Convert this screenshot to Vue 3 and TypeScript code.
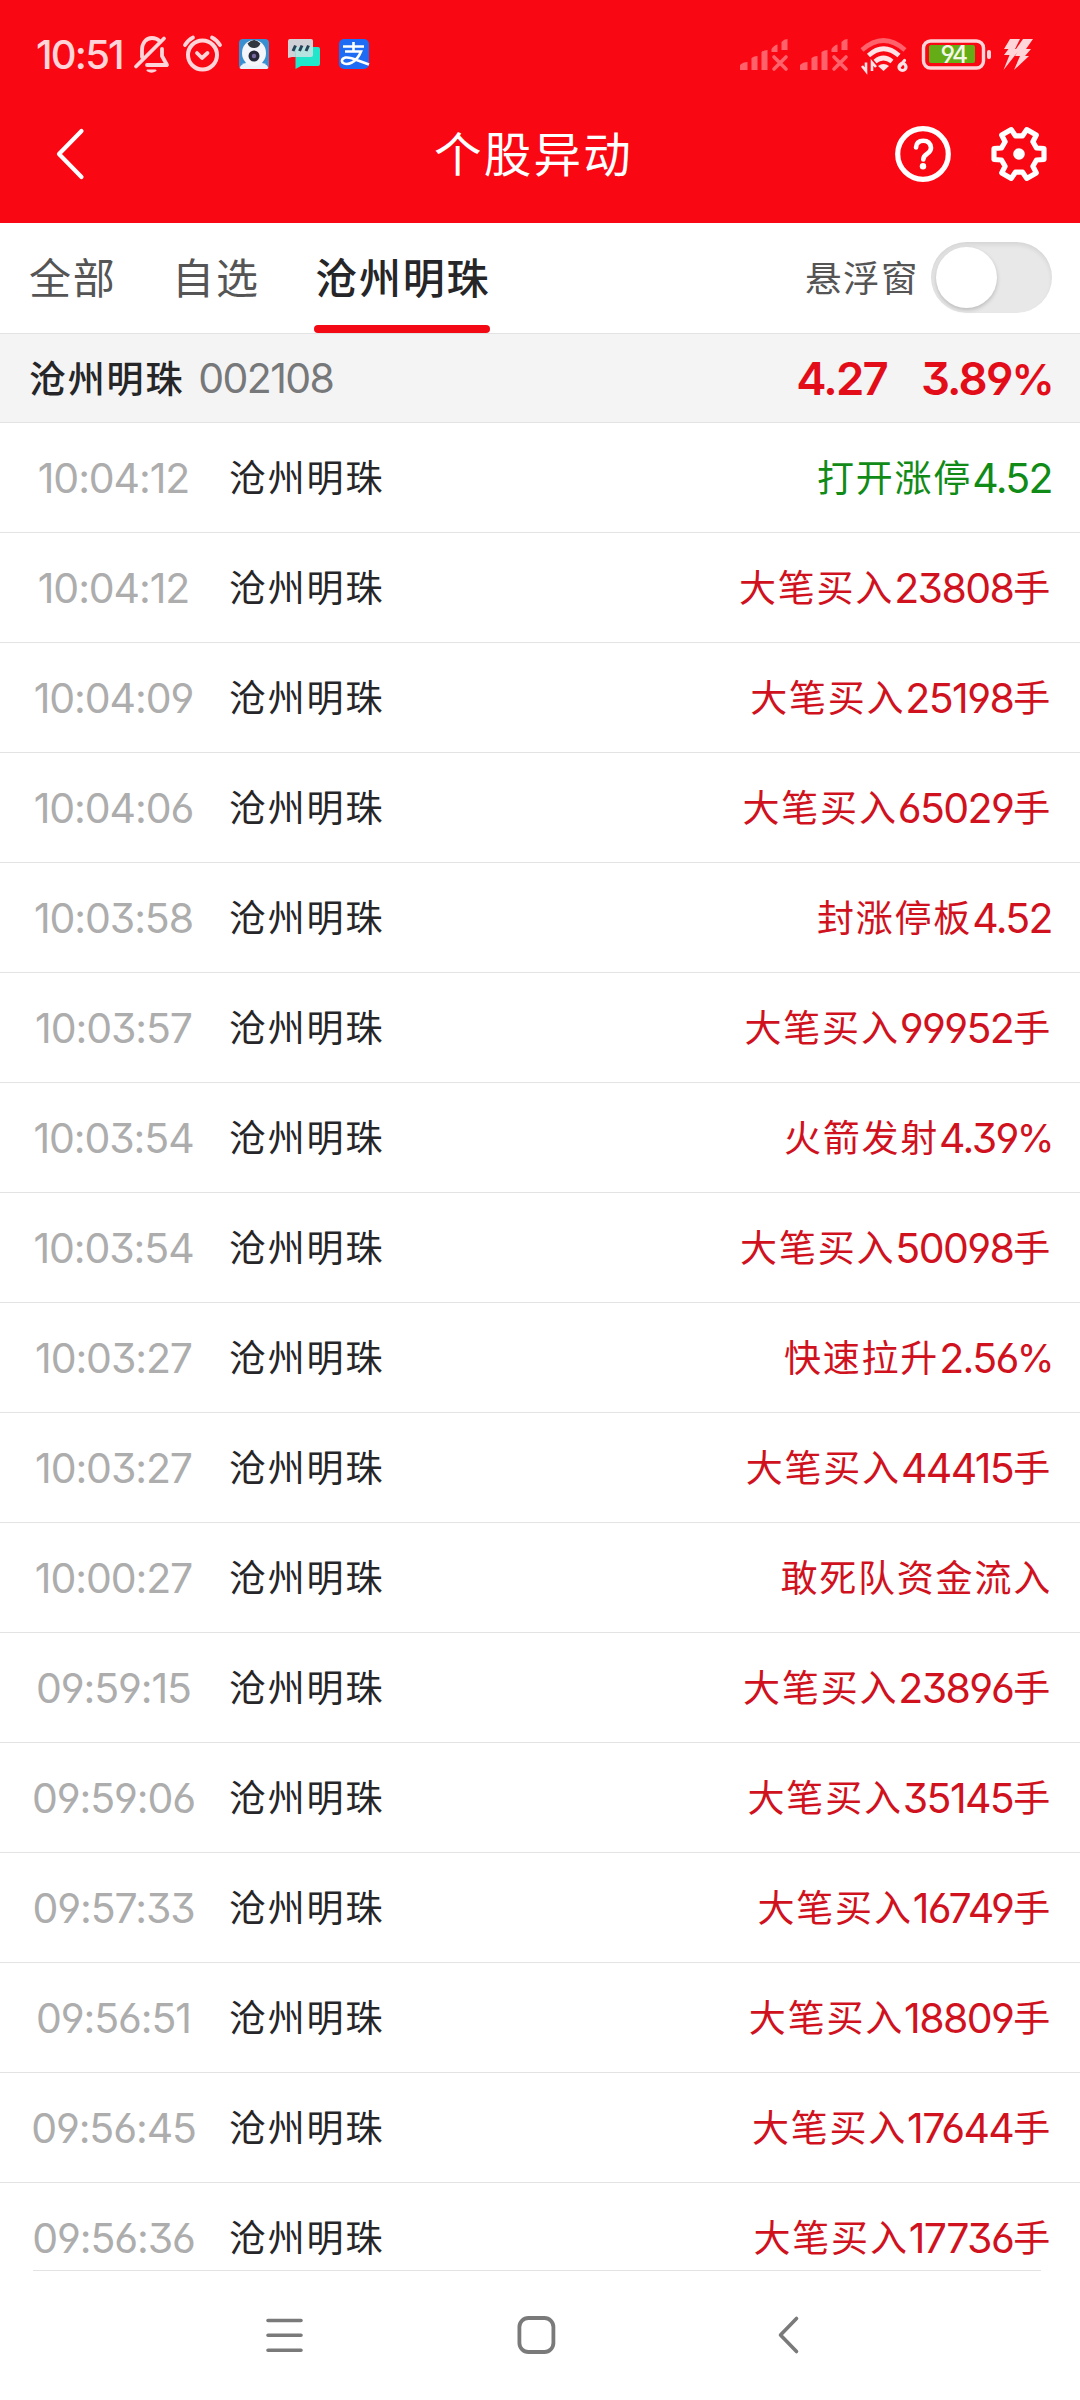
<script setup lang="ts">
interface Move {
  time: string
  label: string
  down?: boolean
}

const stock = '沧州明珠'

const moves: Move[] = [
  { time: '10:04:12', label: '打开涨停4.52', down: true },
  { time: '10:04:12', label: '大笔买入23808手' },
  { time: '10:04:09', label: '大笔买入25198手' },
  { time: '10:04:06', label: '大笔买入65029手' },
  { time: '10:03:58', label: '封涨停板4.52' },
  { time: '10:03:57', label: '大笔买入99952手' },
  { time: '10:03:54', label: '火箭发射4.39%' },
  { time: '10:03:54', label: '大笔买入50098手' },
  { time: '10:03:27', label: '快速拉升2.56%' },
  { time: '10:03:27', label: '大笔买入44415手' },
  { time: '10:00:27', label: '敢死队资金流入' },
  { time: '09:59:15', label: '大笔买入23896手' },
  { time: '09:59:06', label: '大笔买入35145手' },
  { time: '09:57:33', label: '大笔买入16749手' },
  { time: '09:56:51', label: '大笔买入18809手' },
  { time: '09:56:45', label: '大笔买入17644手' },
  { time: '09:56:36', label: '大笔买入17736手' },
]

// Splits a label into runs of Chinese text, figures and percent signs.
const runs = (label: string) =>
  (label.match(/[\d.]+|%|[^\d.%]+/g) ?? []).map((text) => ({
    text,
    kind: /^\d/.test(text) ? 'figure' : text === '%' ? 'percent' : 'han',
  }))
</script>

<template>
  <div class="screen">
    <header class="top">
      <div class="status">
        <span class="clock">10:51</span>
        <svg class="status-left" width="240" height="44" viewBox="132 32 240 44" fill="none">
          <g stroke="#ffd5d9" stroke-width="3.8" stroke-linecap="round" stroke-linejoin="round">
            <path d="M136 66.500L164 38.500" />
            <path d="M142 57V50C142 43 146 38 152 38C155 38 157.500 39 159.500 41M162 49V56L167 65H147" />
            <path d="M147.500 70.500Q151.500 73 155.500 70.500Z" fill="#ffd5d9" stroke-width="2" />
            <circle cx="202.500" cy="55" r="14.500" stroke-width="4" />
            <path d="M197 53L202 58L207.500 53" />
            <path d="M185 45Q188 40 193 37.500M212 37.500Q217 40 220 45" />
          </g>
          <rect x="239" y="39" width="30" height="30" rx="4" fill="#3a8fd0" />
          <path d="M239.500 68Q241 62 254 62T268.500 68L267 69H241Z" fill="#e9f2fb" />
          <ellipse cx="254" cy="53" rx="12" ry="13" fill="#f4f6fb" />
          <path d="M247.500 43.500Q254 36.500 260.500 43.500Q258.500 48 254 48T247.500 43.500Z" fill="#33373f" />
          <circle cx="254" cy="56" r="5.500" fill="#272638" />
          <circle cx="254" cy="56" r="2.200" fill="#7569a0" />
          <path d="M290 39H311Q313 39 313 41V55Q313 57 311 57H292L288 58V41Q288 39 290 39Z" fill="#cfd1d6" />
          <path d="M297 47H318Q320 47 320 49V64Q320 66 318 66H301L295.500 69V49Q295.500 47 297 47Z" fill="#21e6cb" />
          <path d="M297 47H313V55Q313 57 311 57H295.500V49Q295.500 47 297 47Z" fill="#b5e3df" />
          <path d="M295.500 45.500L293 51M302 45.500L299.500 51M308.500 45.500L306 51" stroke="#28425a" stroke-width="3" />
          <rect x="339" y="39" width="30" height="30" rx="5" fill="#1d6cf3" />
          <path
            d="M343 46.500H364M353.500 42V51.500M345 51.500H361Q358 59 352 62.500Q346 65.500 342.500 62.500Q340.500 59 345.500 57.500Q350 57 358 60.500L369 64.500"
            stroke="#fff"
            stroke-width="2.600"
          />
        </svg>
        <svg class="status-right" width="310" height="44" viewBox="736 32 310 44">
          <g v-for="n in 2" :key="n" :transform="`translate(${(n - 1) * 60} 0)`" fill="#ff626b">
            <path d="M740 70V65Q743 62 747.500 62V70Z M751.500 70V58Q754 56 757.500 56V70Z M761.500 70V52Q764 50 767.500 50V70Z M771.500 52V49Q774 45 777.500 44.500V52Z M781.500 50V42Q784 39 787.500 39V50Z" />
            <path d="M774 57L786 69M786 57L774 69" stroke="#ff626b" stroke-width="3.600" stroke-linecap="round" />
          </g>
          <g fill="none" stroke="#ffe3e6" stroke-width="4.600">
            <path d="M862 50Q883.500 31 905 50" stroke="#ff626b" />
            <path d="M868.500 55.500Q883.500 42 899 55.500" />
            <path d="M875 61.500Q883.500 54.500 892 61.500" />
          </g>
          <path d="M878 66Q883.500 62 889 66L883.500 71Z" fill="#ffe3e6" />
          <path d="M862 66L866 71V62.500M876 67L872 62.500V71" fill="none" stroke="#ffe3e6" stroke-width="2.600" />
          <path d="M904.500 60.500L900 66" stroke="#ffe3e6" stroke-width="3.200" stroke-linecap="round" />
          <circle cx="902.500" cy="67" r="3.500" fill="none" stroke="#ffe3e6" stroke-width="3.200" />
          <rect x="923.500" y="41" width="60" height="27" rx="7" fill="none" stroke="#ffd5d9" stroke-width="3.400" />
          <rect x="929" y="45" width="46" height="18" rx="2" fill="#64ad17" />
          <rect x="987" y="50" width="4" height="9" rx="2" fill="#ffd5d9" />
          <text class="charge" x="940.500" y="62.800">94</text>
          <path
            d="M1010 39H1020L1015 49H1020L1003.500 70L1009.500 55H1004L1008.500 49H1004ZM1023 39H1033L1026 49H1031L1025 56H1029L1014 70L1020 56H1015L1019.500 49H1016Z"
            fill="#ffd5d9"
          />
        </svg>
      </div>
      <div class="titlebar">
        <svg class="back" width="32" height="56" viewBox="0 0 32 56" fill="none" stroke="#fff" stroke-width="4.200" stroke-linecap="round" stroke-linejoin="round">
          <path d="M28.500 5L6 28L28.500 51" />
        </svg>
        <h1>个股异动</h1>
        <div class="actions">
          <svg width="58" height="58" viewBox="0 0 58 58" fill="none" stroke="#fff" stroke-linecap="round" stroke-linejoin="round">
            <circle cx="29" cy="29" r="25.300" stroke-width="5.200" />
            <path d="M22 22.500Q22.500 15.800 29.300 15.800T37 22.800Q37 26 33.500 28.500Q29.300 31 29.300 34.500" stroke-width="4.600" />
            <circle cx="29" cy="41.200" r="3.200" fill="#fff" stroke="none" />
          </svg>
          <svg width="58" height="58" viewBox="-29 -29 58 58" fill="none" stroke="#fff" stroke-linejoin="round">
            <path
              d="M17.500 -6L25 -5.500V5.500L17.500 6L13.900 12.200L17.300 18.900L7.700 24.400L3.600 18.200H-3.600L-7.700 24.400L-17.300 18.900L-13.900 12.200L-17.500 6L-25 5.500V-5.500L-17.500 -6L-13.900 -12.200L-17.300 -18.900L-7.700 -24.400L-3.600 -18.200H3.600L7.700 -24.400L17.300 -18.900L13.900 -12.200Z"
              stroke-width="5.200"
            />
            <circle r="5.800" fill="#fff" stroke="none" />
          </svg>
        </div>
      </div>
    </header>

    <nav class="tabs">
      <span class="tab">全部</span>
      <span class="tab">自选</span>
      <span class="tab active">{{ stock }}</span>
      <span class="float-label">悬浮窗</span>
      <span class="switch"><span class="knob"></span></span>
    </nav>

    <section class="quote">
      <span class="quote-name">{{ stock }}</span>
      <span class="quote-code">002108</span>
      <span class="price">4.27</span>
      <span class="change">3.89<span class="sign">%</span></span>
    </section>

    <ul class="list">
      <li v-for="(move, i) in moves" :key="i" class="row">
        <span class="time">{{ move.time }}</span>
        <span class="name">{{ stock }}</span>
        <span class="label" :class="{ down: move.down }">
          <span v-for="(run, j) in runs(move.label)" :key="j" :class="run.kind">{{ run.text }}</span>
        </span>
      </li>
    </ul>

    <footer class="navbar">
      <svg width="44" height="44" viewBox="0 0 44 44" stroke="#7a7a7a" stroke-width="3.600" stroke-linecap="round">
        <path d="M7 6.500H40M7 21.300H40M7 36.300H40" />
      </svg>
      <svg width="44" height="44" viewBox="0 0 44 44" fill="none" stroke="#7a7a7a" stroke-width="3.800">
        <rect x="4.400" y="4" width="34" height="34" rx="9" />
      </svg>
      <svg width="44" height="44" viewBox="0 0 44 44" fill="none" stroke="#7a7a7a" stroke-width="3.600" stroke-linecap="round" stroke-linejoin="round">
        <path d="M27.500 4.500L11.500 21L27.500 37.500" />
      </svg>
    </footer>
  </div>
</template>

<style>
body {
  background: #fff;
}
</style>

<style scoped>
.screen {
  display: flex;
  flex-direction: column;
  width: 1080px;
  height: 2400px;
  overflow: hidden;
  background: #fff;
  color: #262628;
  font-family: Inter, 'Noto Sans CJK SC', sans-serif;
  font-feature-settings: 'cv03', 'cv04', 'cv09';
  white-space: nowrap;
}
.top {
  height: 223px;
  background: #fa0714;
}
.status {
  display: flex;
  align-items: center;
  height: 108px;
  padding-right: 34px;
}
.clock {
  width: 96px;
  padding-left: 36px;
  color: #ffd5d9;
  font-size: 40px;
  font-weight: 500;
  letter-spacing: -1.800px;
}
.status-right {
  margin-left: auto;
}
.charge {
  fill: #f4f7e8;
  font-size: 24.500px;
  font-weight: 500;
  letter-spacing: -2px;
}
.titlebar {
  display: grid;
  grid-template-columns: 250px 1fr 250px;
  align-items: center;
  height: 92px;
}
.back {
  margin-left: 53px;
}
h1 {
  margin: 0;
  padding: 2px 13px 0 0;
  color: #fff;
  font-size: 47.500px;
  font-weight: 400;
  line-height: 90px;
  letter-spacing: 2.200px;
  text-align: center;
}
.actions {
  display: flex;
  justify-content: flex-end;
  gap: 38px;
  padding-right: 32px;
}
.tabs {
  display: flex;
  align-items: center;
  height: 111px;
  padding: 0 28px 0 29px;
  border-bottom: 1px solid #e3e3e3;
  box-sizing: border-box;
}
.tab {
  position: relative;
  height: 110px;
  margin-right: 55.500px;
  color: #555;
  font-size: 42px;
  line-height: 112px;
  letter-spacing: 1.800px;
}
.tab.active {
  color: #262628;
  font-weight: 500;
}
.tab.active::after {
  position: absolute;
  right: 0;
  bottom: 0;
  left: -1px;
  height: 8px;
  border-radius: 4px;
  background: #f30914;
  content: '';
}
.float-label {
  margin-left: auto;
  padding-bottom: 4px;
  color: #555;
  font-size: 36.500px;
  letter-spacing: 1.500px;
}
.switch {
  width: 121px;
  height: 71px;
  margin: 0 0 2px 12px;
  padding: 5px;
  border-radius: 36px;
  background: #e8e8e8;
  box-shadow: inset 0 3px 4px rgba(0, 0, 0, 0.08);
  box-sizing: border-box;
}
.knob {
  display: block;
  width: 61px;
  height: 61px;
  border-radius: 50%;
  background: #fff;
  box-shadow: 0 2px 4px rgba(0, 0, 0, 0.2);
}
.quote {
  display: flex;
  align-items: center;
  height: 89px;
  padding: 0 27px 0 29px;
  border-bottom: 1px solid #e3e3e3;
  background: #f4f4f4;
  box-sizing: border-box;
}
.quote-name {
  padding-bottom: 2px;
  font-size: 37px;
  font-weight: 500;
  letter-spacing: 1.800px;
}
.quote-code {
  margin-left: 14px;
  color: #77787a;
  font-size: 41px;
  letter-spacing: -1.600px;
}
.price,
.change {
  color: #e20d19;
  font-size: 45.500px;
  font-weight: 600;
  letter-spacing: -1.800px;
}
.price {
  margin-left: auto;
}
.change {
  margin-left: 34px;
}
.sign {
  font-size: 43px;
}
.list {
  height: 1847px;
  margin: 0;
  padding: 0;
  overflow: hidden;
  list-style: none;
}
.row {
  display: flex;
  align-items: center;
  height: 110px;
  padding-right: 28px;
  border-bottom: 1px solid #e3e3e3;
  box-sizing: border-box;
}
.time {
  width: 227px;
  margin-right: 2px;
  padding-top: 1px;
  color: #adadad;
  font-size: 41px;
  letter-spacing: -1.100px;
  text-align: center;
}
.name,
.han {
  padding-bottom: 3px;
  font-size: 37px;
  letter-spacing: 1.800px;
}
.label {
  display: flex;
  align-items: center;
  margin-left: auto;
  color: #d0121e;
}
.label.down {
  color: #118b17;
}
.figure,
.percent {
  padding-top: 1px;
  font-size: 41px;
  letter-spacing: -1.600px;
}
.percent {
  margin: 0 -1px 0 -1px;
  font-size: 38.500px;
}
.navbar {
  display: flex;
  align-items: center;
  justify-content: space-between;
  flex: 1;
  margin: 0 39px 0 33px;
  padding: 0 228px;
  border-top: 1px solid #e3e3e3;
}
</style>
